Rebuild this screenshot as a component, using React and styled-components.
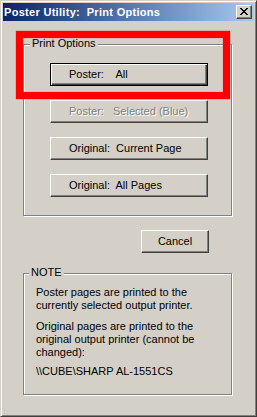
import React from 'react';
import styled, { createGlobalStyle, css } from 'styled-components';

const Global = createGlobalStyle`
  html, body { margin: 0; padding: 0; background: #D4D0C8; }
  body { font-family: "Liberation Sans", Arial, sans-serif; font-size: 11px; color: #000; }
`;

const Window = styled.div`
  box-sizing: border-box;
  width: 257px;
  height: 417px;
  background: #D4D0C8;
  border: 1px solid;
  border-color: #D4D0C8 #404040 #404040 #D4D0C8;
  box-shadow: inset 1px 1px #fff, inset -1px -1px #808080;
  padding: 2px;
  display: flex;
  flex-direction: column;
`;

const TitleBar = styled.div`
  height: 18px;
  display: flex;
  align-items: center;
  justify-content: space-between;
  background: linear-gradient(to right, #0A246A, #A6CAF0);
  padding: 0 2px 0 1px;
`;

const Title = styled.span`
  color: #fff;
  font-weight: bold;
  font-size: 11px;
  letter-spacing: 0.3px;
  white-space: pre;
  line-height: 18px;
`;

const CloseButton = styled.div`
  box-sizing: border-box;
  width: 16px;
  height: 14px;
  background: #D4D0C8;
  border: 1px solid;
  border-color: #fff #404040 #404040 #fff;
  box-shadow: inset -1px -1px #808080;
  display: flex;
  align-items: center;
  justify-content: center;
  padding: 0 1px 1px 0;
`;

const Body = styled.div`
  display: flex;
  flex-direction: column;
  width: 209px;
  padding: 23px 0 0 20px;
`;

const Group = styled.div`
  position: relative;
  box-sizing: border-box;
  width: 209px;
  height: ${p => p.$h}px;
  border: 1px solid #808080;
  box-shadow: 1px 1px 0 #fff, inset 1px 1px 0 #fff;
  padding: ${p => p.$pad};
`;

const Legend = styled.span`
  position: absolute;
  top: -8px;
  left: ${p => p.$left}px;
  padding: 0 2px;
  background: #D4D0C8;
  line-height: 13px;
`;

const Highlight = styled.div`
  position: absolute;
  left: -8px;
  top: -14px;
  width: 214px;
  height: 68px;
  box-sizing: border-box;
  border: 7px solid #FF0000;
  box-shadow: 0 0 1px #ff0000, inset 0 0 1px #ff0000;
  pointer-events: none;
`;

const ButtonStack = styled.div`
  display: flex;
  flex-direction: column;
  gap: 14px;
`;

const Button = styled.button`
  box-sizing: border-box;
  width: ${p => p.$w}px;
  height: 23px;
  margin: 0;
  font: 11px "Liberation Sans", Arial, sans-serif;
  color: #000;
  background: #D4D0C8;
  border: 1px solid;
  border-color: #fff #404040 #404040 #fff;
  box-shadow: inset -1px -1px #808080;
  text-align: ${p => (p.$center ? 'center' : 'left')};
  padding: ${p => (p.$center ? '0 0 1px 0' : '0 0 1px 18px')};
  white-space: pre;
  ${p => p.$default && css`
    border-color: #000;
    box-shadow: inset 1px 1px #fff, inset -1px -1px #404040, inset -2px -2px #808080;
  `}
  &:disabled {
    color: #808080;
    text-shadow: 1px 1px 0 #fff;
  }
`;

const Footer = styled.div`
  display: flex;
  justify-content: flex-end;
  padding: 14px 23px 20px 0;
`;

const NoteText = styled.p`
  margin: ${p => p.$mt}px 0 0 0;
  line-height: 13px;
  white-space: nowrap;
`;

export default function App() {
  return (
    <>
      <Global />
      <Window>
        <TitleBar>
          <Title>{'Poster Utility:  Print Options'}</Title>
          <CloseButton>
            <svg width="8" height="7" viewBox="0 0 8 7" shapeRendering="crispEdges">
              {[0, 1, 2, 3, 4, 5, 6].map(i => (
                <g key={i} fill="#000">
                  <rect x={i} y={i} width="2" height="1" />
                  <rect x={6 - i} y={i} width="2" height="1" />
                </g>
              ))}
            </svg>
          </CloseButton>
        </TitleBar>
        <Body>
          <Group $h={172} $pad="18px 0 0 26px">
            <Legend $left={6}>Print Options</Legend>
            <ButtonStack>
              <Button $w={158} $default>{'Poster:    All'}</Button>
              <Button $w={158} disabled>{'Poster:   Selected (Blue)'}</Button>
              <Button $w={158}>{'Original:  Current Page'}</Button>
              <Button $w={158}>{'Original:  All Pages'}</Button>
            </ButtonStack>
            <Highlight />
          </Group>
          <Footer>
            <Button $w={68} $center>Cancel</Button>
          </Footer>
          <Group $h={122} $pad="12px 0 0 12px">
            <Legend $left={5}>NOTE</Legend>
            <NoteText $mt={0}>Poster pages are printed to the<br />currently selected output printer.</NoteText>
            <NoteText $mt={8}>Original pages are printed to the<br />original output printer (cannot be<br />changed):</NoteText>
            <NoteText $mt={6}>{'\\\\CUBE\\SHARP AL-1551CS'}</NoteText>
          </Group>
        </Body>
      </Window>
    </>
  );
}
